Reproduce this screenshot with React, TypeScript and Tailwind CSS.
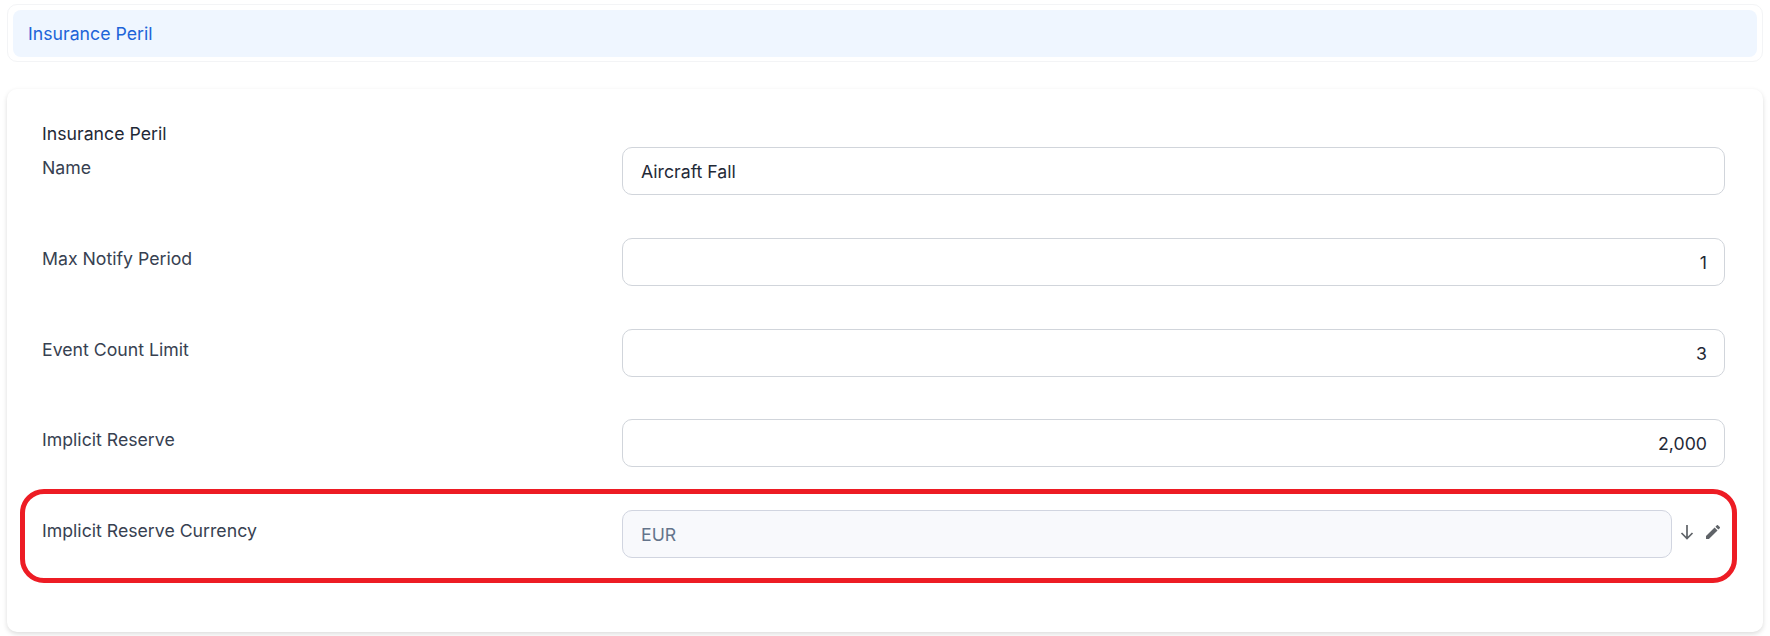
import React from "react";

const inputBase = "h-[48px] rounded-[10px] border border-[#d1d5db] pl-[18px] pr-[17px] pt-[2px] flex items-center text-[17.7px] leading-[24px]";

function Row({ label, value, right }: { label: string; value: string; right?: boolean }) {
  return (
    <div className="flex h-[48px] mb-[42.75px]">
      <div className="w-[580px] shrink-0 pt-[9px] text-[17.7px] leading-[24px] text-[#374151]">{label}</div>
      <div className={`${inputBase} w-[1103px] bg-white text-[#1f2937] ${right ? "justify-end" : ""}`}>{value}</div>
    </div>
  );
}

export default function App() {
  return (
    <div className="relative w-[1770px] h-[636px] overflow-hidden bg-white font-['Inter',sans-serif]">
      <div className="mx-[7px] mt-[4px] h-[58px] rounded-[10px] border border-[#f3f4f6] p-[5px]">
        <div className="h-[47px] rounded-[8px] bg-[#eff6ff] pl-[15px] pt-[1px] flex items-center text-[17.7px] text-[#1d64d8]">
          Insurance Peril
        </div>
      </div>
      <div className="relative mx-[7px] mt-[27px] h-[543px] rounded-[10px] bg-white shadow-[0_2px_5px_rgba(0,0,0,0.14)] pl-[35px] pt-[29px]">
        <div className="h-[29px] pt-[1px] text-[17.7px] leading-[30px] text-[#1f2937]">Insurance Peril</div>
        <Row label="Name" value="Aircraft Fall" />
        <Row label="Max Notify Period" value="1" right />
        <Row label="Event Count Limit" value="3" right />
        <Row label="Implicit Reserve" value="2,000" right />
        <div className="flex h-[48px]">
          <div className="w-[580px] shrink-0 pt-[9px] text-[17.7px] leading-[24px] text-[#374151]">Implicit Reserve Currency</div>
          <div className={`${inputBase} w-[1050px] bg-[#f8f9fc] border-[#d1d5e0] text-[#64748b]`}>EUR</div>
          <div className="ml-[8px] w-[14px] h-[44px] flex items-center justify-center">
            <svg width="14" height="16" viewBox="0 0 14 16" fill="none" stroke="#5f6368" strokeWidth="1.7">
              <path d="M7 1V14.5M1.5 9L7 14.5L12.5 9" />
            </svg>
          </div>
          <div className="ml-[12px] w-[14px] h-[44px] flex items-center justify-center">
            <svg width="14" height="14" viewBox="3 3 18 18" fill="#5f6368">
              <path d="M3 17.25V21h3.75L17.81 9.94l-3.75-3.75L3 17.25zM20.71 7.04a1 1 0 0 0 0-1.41l-2.34-2.34a1 1 0 0 0-1.41 0l-1.83 1.83 3.75 3.75 1.83-1.83z" />
            </svg>
          </div>
        </div>
      </div>
      <div className="absolute left-[20px] top-[489px] w-[1717px] h-[94px] rounded-[24px] border-[5px] border-[#ed1c24]" />
    </div>
  );
}
